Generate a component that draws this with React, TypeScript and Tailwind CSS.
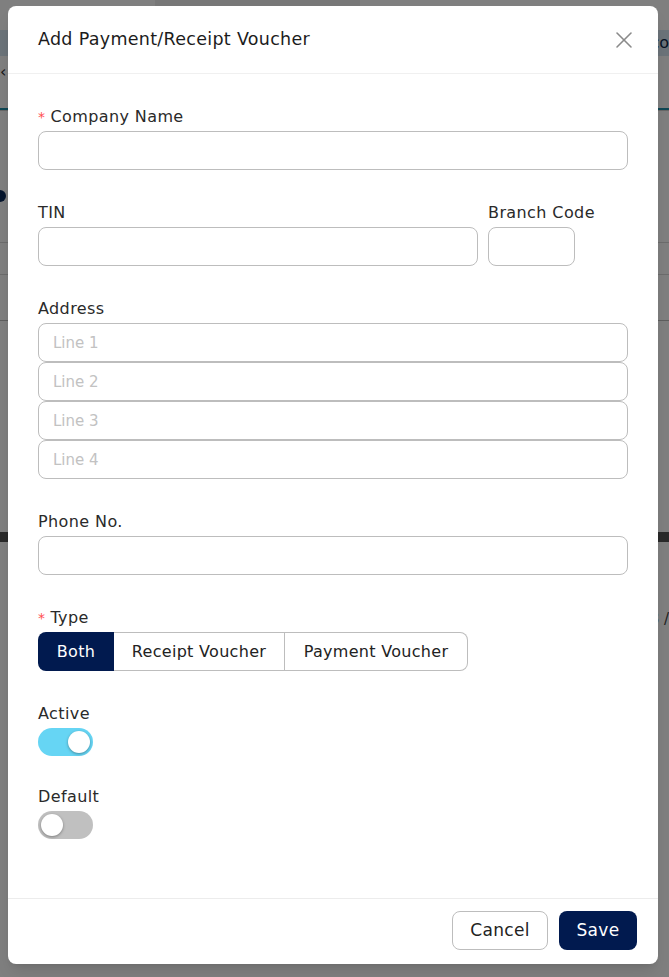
import { useState } from 'react';
import { X } from 'lucide-react';

const NAVY = 'bg-[#011a4f]';

function Label({ text, required }: { text: string; required?: boolean }) {
  return (
    <div className="mb-[3px] flex h-[22px] items-center whitespace-nowrap text-[16px] leading-[22px] tracking-[0.4px] text-[#2a2a2a]">
      {required && <span className="mr-[5px] text-[14px] text-[#ff4d4f]">*</span>}
      {text}
    </div>
  );
}

function TextInput({ placeholder, className = '' }: { placeholder?: string; className?: string }) {
  return (
    <input
      placeholder={placeholder}
      className={`h-[39px] w-full rounded-lg border border-[#bdbdbd] bg-white px-[14px] text-[15px] text-[#222] outline-none placeholder:text-[#c2c2c2] ${className}`}
    />
  );
}

function Toggle({ on, onChange }: { on: boolean; onChange: (v: boolean) => void }) {
  return (
    <button
      onClick={() => onChange(!on)}
      className={`flex h-[28px] w-[55px] items-center rounded-full px-[3px] ${on ? 'justify-end bg-[#66d5f4]' : 'justify-start bg-[#c0c0c0]'}`}
    >
      <span className="h-[22px] w-[22px] rounded-full bg-white shadow-[0_1px_3px_rgba(0,0,0,0.35)]" />
    </button>
  );
}

function BackgroundPage() {
  return (
    <div className="flex h-full flex-col bg-white">
      <div className="flex h-[30px] bg-white">
        <div className="w-[155px]" />
        <div className="flex h-[24px] w-[205px] items-center gap-2 rounded-b bg-[#eeeeee] px-3 text-[14px] text-[#444]">
          <span>⌕</span>
          <span>Search...</span>
        </div>
      </div>
      <div className="flex h-[26px] items-center justify-end bg-[#d6e6f2] text-[16px] text-[#0b2a4a]">co</div>
      <div className="flex h-[32px] items-center text-[16px] text-[#333]">‹</div>
      <div className="h-[20px]" />
      <div className="h-[2px] w-full bg-[#1f8fa8]" />
      <div className="h-px bg-[#cfcfcf]" />
      <div className="h-[79px]" />
      <div className="ml-[-6px] h-[12px] w-[12px] rounded-full bg-[#0b2a5a]" />
      <div className="h-[40px]" />
      <div className="h-px bg-[#d9d9d9]" />
      <div className="h-[31px]" />
      <div className="h-px bg-[#d9d9d9]" />
      <div className="h-[45px]" />
      <div className="h-px bg-[#bdbdbd]" />
      <div className="h-[211px]" />
      <div className="h-[10px] bg-[#555555]" />
      <div className="h-[66px]" />
      <div className="flex justify-end text-[15px] text-[#444]">3 /</div>
    </div>
  );
}

export default function App() {
  const [type, setType] = useState('both');
  const [active, setActive] = useState(true);
  const [isDefault, setIsDefault] = useState(false);

  const types = [
    { key: 'both', label: 'Both', w: 'w-[76px]' },
    { key: 'receipt', label: 'Receipt Voucher', w: 'w-[171px]' },
    { key: 'payment', label: 'Payment Voucher', w: 'w-[183px]' },
  ];

  return (
    <div className="relative h-[977px] w-[669px] overflow-hidden font-['DejaVu_Sans',sans-serif]">
      <BackgroundPage />
      <div className="absolute inset-0 bg-black/50">
        <div className="ml-2 mt-[6px] flex h-[958px] w-[650px] flex-col rounded-lg bg-white shadow-lg">
          {/* header */}
          <div className="flex h-[68px] shrink-0 items-center justify-between border-b border-[#f0f0f0] pl-[30px] pr-[20px]">
            <h2 className="text-[17.5px] tracking-[0.3px] text-[#1c1c1c]">Add Payment/Receipt Voucher</h2>
            <button className="text-[#8a8a8a]">
              <X size={28} strokeWidth={1.3} />
            </button>
          </div>

          {/* body */}
          <div className="flex-1 px-[30px] pt-8">
            <div className="mb-8">
              <Label text="Company Name" required />
              <TextInput className="border-[#8fbcc8]" />
            </div>

            <div className="mb-8 flex gap-[10px]">
              <div className="w-[440px]">
                <Label text="TIN" />
                <TextInput />
              </div>
              <div className="w-[87px]">
                <Label text="Branch Code" />
                <TextInput />
              </div>
            </div>

            <div className="mb-8">
              <Label text="Address" />
              <div className="flex flex-col">
                {['Line 1', 'Line 2', 'Line 3', 'Line 4'].map(p => (
                  <TextInput key={p} placeholder={p} />
                ))}
              </div>
            </div>

            <div className="mb-8">
              <Label text="Phone No." />
              <TextInput />
            </div>

            <div className="mb-8">
              <Label text="Type" required />
              <div className="flex">
                {types.map((t, i) => (
                  <button
                    key={t.key}
                    onClick={() => setType(t.key)}
                    className={`h-[39px] ${t.w} text-[16px] tracking-[0.3px] ${
                      type === t.key ? `${NAVY} text-white` : 'border-y border-r border-[#bdbdbd] bg-white text-[#222]'
                    } ${i === 0 ? 'rounded-l-lg' : ''} ${i === types.length - 1 ? 'rounded-r-lg' : ''}`}
                  >
                    {t.label}
                  </button>
                ))}
              </div>
            </div>

            <div className="mb-[30px]">
              <Label text="Active" />
              <Toggle on={active} onChange={setActive} />
            </div>

            <div>
              <Label text="Default" />
              <Toggle on={isDefault} onChange={setIsDefault} />
            </div>
          </div>

          {/* footer */}
          <div className="flex h-[66px] shrink-0 items-start justify-end gap-[11px] border-t border-[#ececec] pr-[21px] pt-[12px]">
            <button className="h-[39px] w-[96px] rounded-lg border border-[#bdbdbd] bg-white text-[17px] tracking-[0.3px] text-[#222]">
              Cancel
            </button>
            <button className={`h-[39px] w-[78px] rounded-lg ${NAVY} text-[17px] tracking-[0.3px] text-white`}>
              Save
            </button>
          </div>
        </div>
      </div>
    </div>
  );
}
